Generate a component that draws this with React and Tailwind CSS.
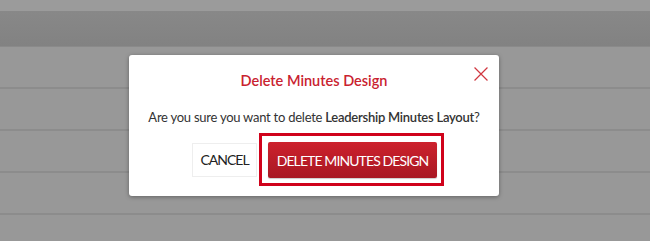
import React from 'react';

const rows = [0, 1, 2, 3];

const App = () => {
  return (
    <div className="relative w-[650px] h-[241px] overflow-hidden bg-[#989898] font-['Lato','Liberation_Sans',sans-serif]">
      {/* page behind the overlay */}
      <div className="h-[11px] bg-[#9b9b9b]" />
      <div className="h-[36px] bg-gradient-to-b from-[#888888] to-[#828282] border-b border-[#8a8a8a]" />
      {rows.map((r) => (
        <div key={r} className="h-[42px] border-b-2 border-[#8c8c8c] bg-[#989898]" />
      ))}

      {/* dialog */}
      <div className="absolute left-[129px] top-[55px] w-[370px] h-[141px] bg-white rounded-[3px] shadow-[0_1px_4px_rgba(0,0,0,0.35)] flex flex-col items-center pt-[16px]">
        <button className="absolute right-[12px] top-[12px] w-[13px] h-[13px] text-[#d0363f]">
          <svg viewBox="0 0 13 13" className="w-[14px] h-[14px]" fill="none" stroke="currentColor" strokeWidth="1.1">
            <path d="M0.5 0.5 L12.5 12.5 M12.5 0.5 L0.5 12.5" />
          </svg>
        </button>
        <h2 className="text-[14.5px] leading-[20px] font-semibold text-[#c9222f]">Delete Minutes Design</h2>
        <p className="mt-[16px] text-[13px] leading-[20px] text-[#333333] tracking-[-0.25px]">
          Are you sure you want to delete <span className="font-semibold">Leadership Minutes Layout</span>?
        </p>
        <div className="mt-[6px] flex items-center pl-[8px]">
          <button className="h-[34px] w-[65px] border border-[#eeeeee] bg-white text-[14px] text-[#222222] tracking-[-1px]">
            CANCEL
          </button>
          <div className="ml-[2px] border-[3px] border-[#d0021b] pl-[6px] pr-[4px] pt-[6px] pb-[5px]">
            <button className="h-[36px] w-[169px] rounded-[2px] bg-gradient-to-b from-[#cd212d] to-[#a81823] text-white text-[14px] tracking-[-0.9px] shadow-[0_1px_1px_rgba(0,0,0,0.2)]">
              DELETE MINUTES DESIGN
            </button>
          </div>
        </div>
      </div>
    </div>
  );
};

export default App;
